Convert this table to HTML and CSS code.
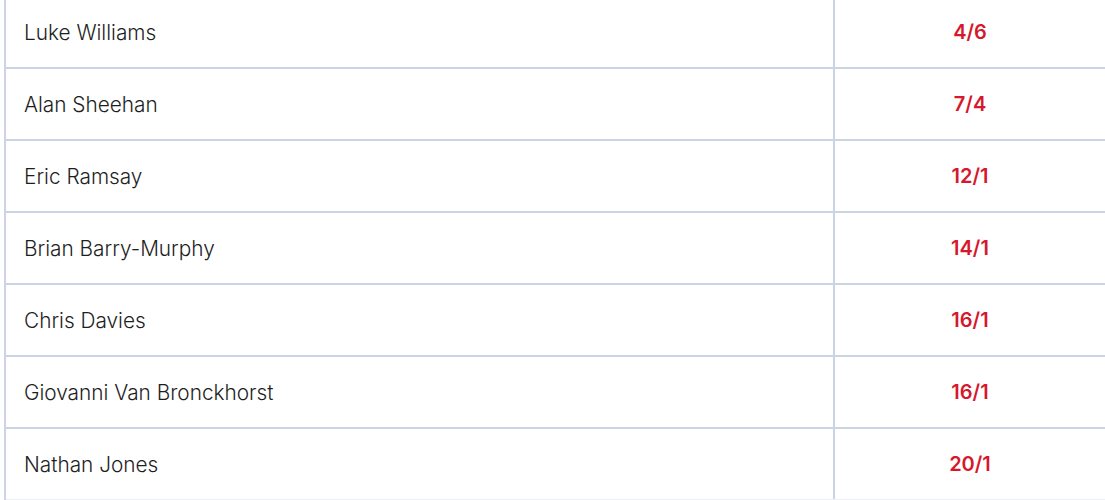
FILE: index.html
```html
<!DOCTYPE html>
<html lang="en">
<head>
<meta charset="utf-8">
<link rel="stylesheet" href="styles.css">
</head>
<body>
<div class="table">
  <div class="row"><div class="name">Luke Williams</div><div class="odds">4/6</div></div>
  <div class="row"><div class="name">Alan Sheehan</div><div class="odds">7/4</div></div>
  <div class="row"><div class="name">Eric Ramsay</div><div class="odds">12/1</div></div>
  <div class="row"><div class="name">Brian Barry-Murphy</div><div class="odds">14/1</div></div>
  <div class="row"><div class="name">Chris Davies</div><div class="odds">16/1</div></div>
  <div class="row"><div class="name">Giovanni Van Bronckhorst</div><div class="odds">16/1</div></div>
  <div class="row"><div class="name">Nathan Jones</div><div class="odds">20/1</div></div>
</div>
</body>
</html>
```
FILE: styles.css
```css
html, body {
  margin: 0;
  padding: 0;
  background: #ffffff;
  overflow: hidden;
}
body {
  font-family: "Inter", "Noto Sans", sans-serif;
}
.table {
  margin: -3px 0 0 4px;
  border-left: 2px solid #ccd3e4;
}
.row {
  display: grid;
  grid-template-columns: 829px 1fr;
  height: 70px;
  border-bottom: 2px solid #ccd3e4;
}
.row:last-child {
  border-bottom: 1px solid #eef0f5;
}
.name {
  display: flex;
  align-items: center;
  padding-left: 18px;
  font-size: 20.8px;
  font-weight: 300;
  color: #1e1e1e;
  border-right: 2px solid #ccd3e4;
}
.odds {
  display: flex;
  align-items: center;
  justify-content: center;
  font-size: 20px;
  font-weight: 600;
  color: #d6182c;
}
```
